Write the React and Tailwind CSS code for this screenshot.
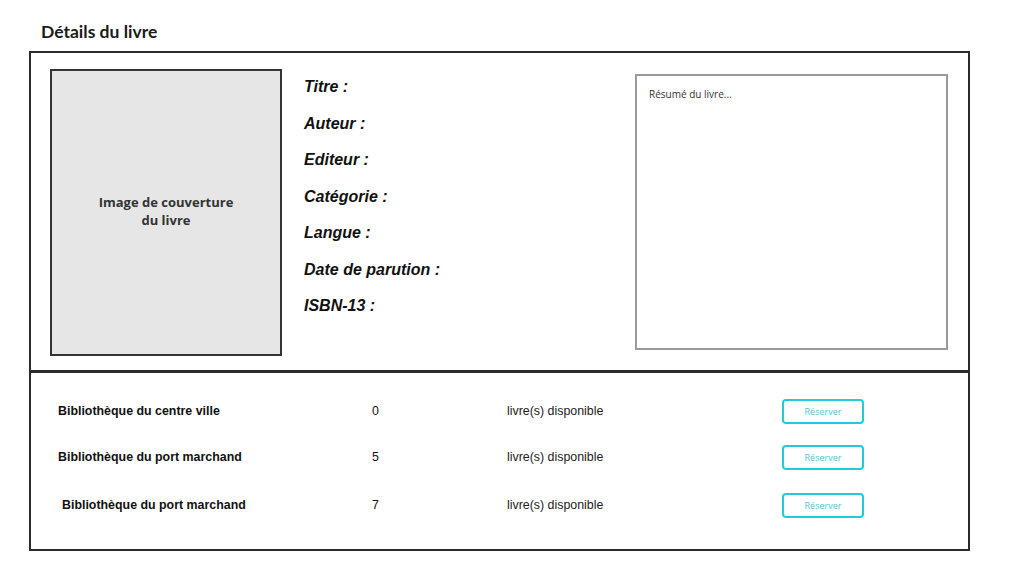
export default function App() {
  const rows = [
    { name: "Bibliothèque du centre ville", n: "0", mt: "mt-[26px]", indent: "" },
    { name: "Bibliothèque du port marchand", n: "5", mt: "mt-[21px]", indent: "" },
    { name: "Bibliothèque du port marchand", n: "7", mt: "mt-[23px]", indent: "pl-1" },
  ];
  const labels = ["Titre :", "Auteur :", "Editeur :", "Catégorie :", "Langue :", "Date de parution :", "ISBN-13 :"];
  return (
    <div className="w-[1019px] h-[569px] bg-white relative overflow-hidden">
      <div className="pl-[41px] pt-[21px] h-[51px]">
        <h1 className="text-[17.5px] leading-[22px] font-bold text-[#1a1a1a]" style={{ fontFamily: "Lato, 'Noto Sans', sans-serif" }}>
          Détails du livre
        </h1>
      </div>
      <div className="ml-[29px] w-[941px]">
        <div className="h-[321px] border-2 border-[#2b2b2b] flex">
          <div className="ml-[19px] mt-[16px] w-[232px] h-[287px] border-2 border-[#333] bg-[#e6e6e6] flex items-center justify-center">
            <p className="text-center text-[13px] leading-[18px] font-bold text-[#333] mt-[-4px]" style={{ fontFamily: "'Open Sans', sans-serif" }}>
              Image de couverture<br />du livre
            </p>
          </div>
          <div className="ml-[22px] w-[331px] mt-[16px] flex flex-col" style={{ fontFamily: "'Liberation Sans', Arial, sans-serif" }}>
            {labels.map((l) => (
              <div key={l} className="text-[16px] leading-[36.5px] font-bold italic text-[#111]">{l}</div>
            ))}
          </div>
          <div className="mt-[21px] w-[313px] h-[276px] border-2 border-[#9a9a9a] bg-white">
            <p className="pl-[12px] pt-[11px] text-[10px] leading-[14px] text-[#333]" style={{ fontFamily: "'Open Sans', sans-serif" }}>
              Résumé du livre...
            </p>
          </div>
        </div>
        <div className="h-[179px] border-x-2 border-b-2 border-t border-[#2b2b2b] flex flex-col" style={{ fontFamily: "'Liberation Sans', Arial, sans-serif" }}>
          {rows.map((r, i) => (
            <div key={i} className={`${r.mt} h-[25px] flex items-center pl-[27px]`}>
              <div className={`w-[314px] text-[12.4px] font-bold text-[#111] ${r.indent}`}>{r.name}</div>
              <div className="w-[135px] text-[12.4px] text-[#111]">{r.n}</div>
              <div className="w-[275px] text-[12.4px] text-[#222]">livre(s) disponible</div>
              <div className="w-[82px] h-[25px] border-2 border-[#22cbd6] rounded-[4px] bg-white text-[9px] text-[#4cc9d3] flex items-center justify-center" style={{ fontFamily: "'Open Sans', sans-serif" }}>
                Réserver
              </div>
            </div>
          ))}
        </div>
      </div>
    </div>
  );
}
